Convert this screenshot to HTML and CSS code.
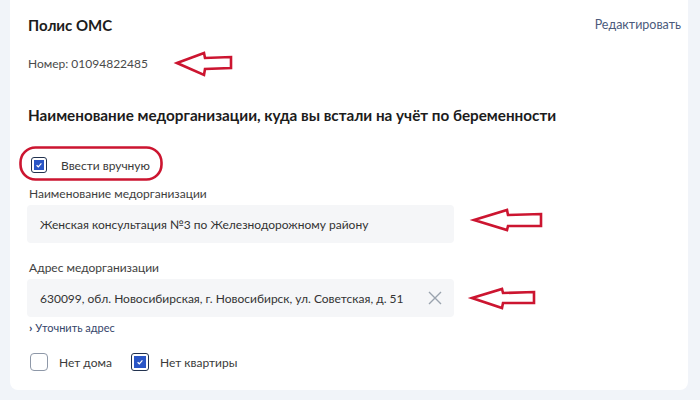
FILE: index.html
```html
<!DOCTYPE html>
<html lang="ru">
<head>
    <meta charset="UTF-8">
    <meta name="viewport" content="width=device-width, initial-scale=1.0">
    <title>Полис ОМС</title>
    <link rel="stylesheet" href="styles.css">
</head>
<body>
    <div class="card">
        <div class="card-head">
            <h2 class="title">Полис ОМС</h2>
            <a class="edit-link" href="#">Редактировать</a>
        </div>
        <p class="number">Номер: 01094822485</p>

        <h3 class="section-title">Наименование медорганизации, куда вы встали на учёт по беременности</h3>

        <label class="check check-manual">
            <span class="box checked"></span>
            <span>Ввести вручную</span>
        </label>

        <div class="field">
            <div class="field-label">Наименование медорганизации</div>
            <div class="input">Женская консультация №3 по Железнодорожному району</div>
        </div>

        <div class="field">
            <div class="field-label">Адрес медорганизации</div>
            <div class="input">
                <span>630099, обл. Новосибирская, г. Новосибирск, ул. Советская, д. 51</span>
                <svg class="clear" width="14" height="14" viewBox="0 0 14 14">
                    <path d="M1 1L13 13M13 1L1 13" stroke="#9aa3ae" stroke-width="1.4" fill="none"/>
                </svg>
            </div>
            <a class="more" href="#"><span class="chev">&#x203A;</span> Уточнить адрес</a>
        </div>

        <div class="checks">
            <label class="check">
                <span class="box"></span>
                <span>Нет дома</span>
            </label>
            <label class="check">
                <span class="box checked"></span>
                <span>Нет квартиры</span>
            </label>
        </div>
    </div>

    <!-- red marks drawn over the screenshot -->
    <svg class="marks" width="700" height="400" viewBox="0 0 700 400">
        <g fill="none" stroke="#cc1530" stroke-width="2.6" stroke-linejoin="miter">
            <polygon points="177,63 204,53 205,58 231,57 231,68 205,69 204,75"/>
            <polygon points="474,220 507,210 508,215 541,214 541,226 508,226 507,230"/>
            <polygon points="472,298 502,289 503,293 534,292 534,303 503,303 502,308"/>
            <rect x="20.5" y="147.5" width="141" height="32" rx="15" ry="15"/>
        </g>
    </svg>
</body>
</html>
```

FILE: styles.css
```css
body {
    margin: 0;
    background: #f1f4f9;
    font-family: Lato, "Open Sans", sans-serif;
    color: #2f2f2f;
    position: relative;
    width: 700px;
    height: 400px;
    overflow: hidden;
}
.card {
    background: #fff;
    margin: 0 12px 0 10px;
    height: 390px;
    box-sizing: border-box;
    border-radius: 0 0 8px 8px;
    padding: 15px 7px 0 18px;
}
.card-head {
    display: flex;
    justify-content: space-between;
    align-items: center;
    height: 20px;
}
.title {
    margin: 0;
    font-size: 15px;
    line-height: 20px;
    font-weight: 700;
    color: #1c1c1c;
}
.edit-link {
    font-size: 12.5px;
    line-height: 20px;
    color: #4c5b7c;
    text-decoration: none;
}
.number {
    margin: 20px 0 0;
    font-size: 12px;
    line-height: 18px;
    color: #4a4a4a;
}
.section-title {
    margin: 32px 0 0;
    font-size: 15.25px;
    line-height: 20px;
    font-weight: 700;
    color: #1c1c1c;
}
.check {
    display: flex;
    align-items: center;
    gap: 11px;
    height: 20px;
    font-size: 12px;
    color: #3a3a3a;
}
.check-manual {
    margin: 30px 0 0 3px;
    gap: 14px;
}
.box {
    width: 16px;
    height: 16px;
    box-sizing: border-box;
    border: 1.5px solid #8e98a8;
    border-radius: 4px;
    background: #fff;
}
.box.checked {
    border-color: #22324f;
    padding: 2px;
    background-clip: content-box;
    background-color: #2a56c6;
    background-image: url("data:image/svg+xml,%3Csvg xmlns='http://www.w3.org/2000/svg' width='10' height='10' viewBox='0 0 10 10'%3E%3Cpath d='M2.6 5.2L4.3 6.8L7.4 3.4' stroke='white' stroke-width='1.2' fill='none'/%3E%3C/svg%3E");
    background-repeat: no-repeat;
    background-position: center;
    border-radius: 3px;
}
.field {
    margin-top: 10px;
}
.field-label {
    font-size: 12px;
    line-height: 18px;
    color: #3e3e3e;
    margin: 0 0 2px 1px;
}
.input {
    width: 427px;
    height: 38px;
    margin-left: -1px;
    box-sizing: border-box;
    background: #f5f6f8;
    border-radius: 4px;
    padding: 0 12px 0 13px;
    display: flex;
    align-items: center;
    justify-content: space-between;
    font-size: 12px;
    color: #333;
    white-space: nowrap;
}
.field + .field {
    margin-top: 16px;
}
.clear {
    margin-right: 0;
}
.more {
    display: block;
    margin: 4px 0 0 1px;
    font-size: 11px;
    line-height: 14px;
    color: #35456a;
    text-decoration: none;
}
.chev {
    font-weight: 700;
    font-size: 12px;
}
.checks {
    display: flex;
    gap: 19px;
    margin: 17px 0 0 2px;
}
.checks .box {
    width: 18px;
    height: 18px;
}
.marks {
    position: absolute;
    top: 0;
    left: 0;
}
```
